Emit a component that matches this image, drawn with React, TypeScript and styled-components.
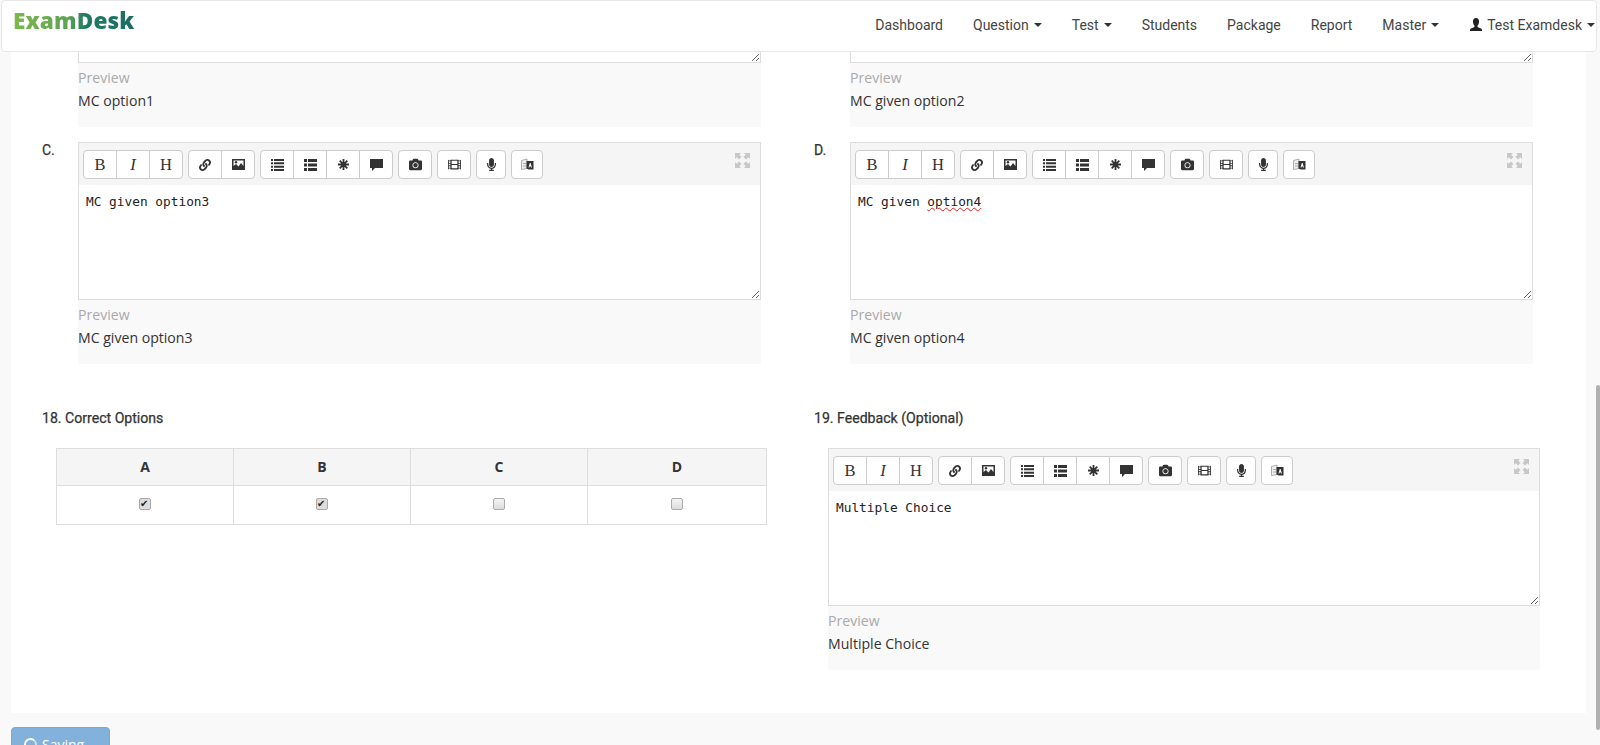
import React from 'react';
import styled, { createGlobalStyle } from 'styled-components';
import { FaLink, FaCamera, FaFilm, FaMicrophone } from 'react-icons/fa';

const Global = createGlobalStyle`
  html, body { margin: 0; padding: 0; height: 745px; overflow: hidden; background: #f9f9f9; }
  body { font-family: "Open Sans", sans-serif; color: #333; }
  * { box-sizing: border-box; }
`;

const Page = styled.div`
  width: 1600px;
  height: 745px;
  overflow: hidden;
  padding-left: 11px;
`;

const Navbar = styled.nav`
  position: fixed;
  top: 0;
  left: 1px;
  width: 1596px;
  height: 52px;
  background: #fff;
  border: 1px solid #e7e7e7;
  border-radius: 4px;
  display: flex;
  align-items: flex-start;
  justify-content: space-between;
  z-index: 5;
`;

const Logo = styled.span`
  margin: 6px 0 0 11px;
  font-family: "Open Sans", sans-serif;
  font-weight: 800;
  font-size: 22.6px;
  line-height: 28px;
  letter-spacing: 0.1px;
  background: linear-gradient(90deg, #7cb84c 0%, #5fa552 45%, #1f7a63 60%, #1c6c66 100%);
  -webkit-background-clip: text;
  background-clip: text;
  color: transparent;
`;

const NavList = styled.ul`
  list-style: none;
  display: flex;
  margin: 0;
  padding: 0;
  height: 48px;
  align-items: center;
`;

const NavItem = styled.li`
  display: flex;
  align-items: center;
  padding: 0 15px;
  font-family: Roboto, sans-serif;
  font-size: 14px;
  color: #444;
  white-space: nowrap;
  &:last-child { padding: 0 1px 0 15px; }
`;

const Caret = styled.span`
  width: 0;
  height: 0;
  margin-left: 5px;
  border-left: 4px solid transparent;
  border-right: 4px solid transparent;
  border-top: 4px solid #333;
`;

const UserIconSvg = styled.svg`
  margin-right: 4px;
  flex: none;
`;

const Panel = styled.main`
  width: 1575px;
  height: 713px;
  background: #fff;
  padding-left: 31px;
`;

const Columns = styled.div`
  display: grid;
  grid-template-columns: 772px 772px;
`;

const OptionRow = styled(Columns)`
  margin-bottom: 15px;
`;

const Option = styled.div`
  display: flex;
  align-items: flex-start;
`;

const OptionLetter = styled.div`
  width: 36px;
  margin-top: -1px;
  font-family: Roboto, sans-serif;
  font-weight: 400;
  -webkit-text-stroke: 0.25px #333;
  font-size: 14px;
  line-height: 18px;
`;

const OptionBody = styled.div`
  width: 683px;
`;

const Toolbar = styled.div`
  display: flex;
  align-items: flex-start;
  gap: 5px;
  height: 43px;
  padding: 7px 4px 0;
  background: #f5f5f5;
  border: 1px solid #ddd;
  border-bottom: 0;
`;

const ButtonGroup = styled.div`
  display: flex;
`;

const ToolButton = styled.button<{ $w?: number }>`
  width: ${(p) => p.$w ?? 34}px;
  height: 29px;
  margin-left: -1px;
  padding: 0;
  display: flex;
  align-items: center;
  justify-content: center;
  background: #fff;
  border: 1px solid #ccc;
  color: #333;
  font-family: "Liberation Serif", serif;
  font-size: 16.5px;
  svg { display: block; }
  &:first-child { margin-left: 0; border-radius: 4px 0 0 4px; }
  &:last-child { border-radius: 0 4px 4px 0; }
  &:only-child { border-radius: 4px; }
`;

const Italic = styled.i`
  font-style: italic;
`;

const Expand = styled.svg`
  margin: 3px 6px 0 auto;
  flex: none;
`;

const TextBox = styled.div<{ $h: number }>`
  height: ${(p) => p.$h}px;
  padding: 8px 7px;
  background: #fff;
  border: 1px solid #ddd;
  border-top: 0;
  font-family: "DejaVu Sans Mono", monospace;
  font-size: 12.8px;
  line-height: 18px;
  color: #222;
  white-space: pre;
  overflow: auto;
  resize: vertical;
`;

const Misspelled = styled.span`
  text-decoration: underline wavy #e02020 1px;
  text-underline-offset: 1px;
`;

const Preview = styled.div`
  height: 64px;
  padding-top: 3px;
  background: #f9f9f9;
  font-size: 14.1px;
  line-height: 23px;
`;

const PreviewTitle = styled.div`
  color: #aaa;
`;

const SectionRow = styled(Columns)`
  padding-top: 44px;
`;

const SectionTitle = styled.div`
  font-family: Roboto, sans-serif;
  font-weight: 400;
  -webkit-text-stroke: 0.25px #333;
  font-size: 14.1px;
  line-height: 20px;
  color: #333;
  margin-bottom: 20px;
`;

const Indented = styled.div<{ $w: number }>`
  margin-left: 14px;
  width: ${(p) => p.$w}px;
`;

const Table = styled.table`
  width: 711px;
  table-layout: fixed;
  border-collapse: collapse;
  border: 1px solid #ddd;
`;

const HeadCell = styled.th`
  height: 37px;
  padding: 0 0 1px;
  background: #f5f5f5;
  border: 1px solid #ddd;
  font-family: "Open Sans", sans-serif;
  font-size: 14px;
  font-weight: 700;
  color: #333;
  &:not(:last-child) { width: 177px; }
`;

const BodyCell = styled.td`
  height: 39px;
  padding: 0 0 2px;
  text-align: center;
  border: 1px solid #ddd;
`;

const Check = styled.input`
  appearance: none;
  display: block;
  position: relative;
  width: 12px;
  height: 12px;
  margin: 0 auto;
  border: 1px solid #aaa;
  border-radius: 2px;
  background: linear-gradient(#f4f4f4, #dcdcdc);
  &:checked { background: #ddd; }
  &:checked::after {
    content: '✔';
    position: absolute;
    left: 0;
    top: -1px;
    font-size: 10px;
    line-height: 12px;
    color: #222;
    font-family: "DejaVu Sans", sans-serif;
  }
`;

const SaveButton = styled.button`
  display: flex;
  align-items: center;
  gap: 5px;
  width: 99px;
  height: 34px;
  margin-top: 14px;
  padding: 0 12px;
  background: #82b1dc;
  border: 1px solid #7aa8d3;
  border-radius: 4px;
  color: #fff;
  font-family: "Open Sans", sans-serif;
  font-size: 14px;
`;

const Spinner = styled.span`
  width: 13px;
  height: 13px;
  flex: none;
  border: 2px solid #fff;
  border-radius: 50%;
  border-right-color: rgba(255, 255, 255, 0.6);
`;

const ScrollThumb = styled.div`
  position: fixed;
  top: 385px;
  right: 0;
  width: 4px;
  height: 345px;
  background: #b0b0b0;
  border-radius: 2px;
`;

const UserIcon = () => (
  <UserIconSvg width="14" height="14" viewBox="0 0 14 14">
    <path fill="#222" d="M7 0c2.3 0 3.2 1.7 3 4-.1 1.4-.6 2.800-1.400 3.600-.3.600-.2 1.300.4 1.600 1.500.7 3.500 1.100 4 2.300v1.500H1v-1.500c.5-1.200 2.500-1.600 4-2.300.6-.3.700-1 .4-1.600C4.600 6.800 4.100 5.400 4 4 3.800 1.700 4.700 0 7 0z" />
  </UserIconSvg>
);

const PictureIcon = () => (
  <svg width="13" height="13" viewBox="0 0 13 13">
    <path fill="#333" fillRule="evenodd" d="M0 1h13v11H0zM1.500 2.500V8l2.500-2 2.500 2.500L9 5l2.500 3V2.500z" />
    <circle cx="4" cy="4.300" r="1.200" fill="#333" />
  </svg>
);

const ListIcon = () => (
  <svg width="13" height="12" viewBox="0 0 13 12" fill="#333">
    <path d="M0 0h2v2H0zM3 0h10v2H3zM0 3.300h2v2H0zM3 3.300h10v2H3zM0 6.700h2v2H0zM3 6.700h10v2H3zM0 10h2v2H0zM3 10h10v2H3z" />
  </svg>
);

const ThListIcon = () => (
  <svg width="13" height="12" viewBox="0 0 13 12" fill="#333">
    <path d="M0 0h3v3H0zM4 0h9v3H4zM0 4.500h3v3H0zM4 4.500h9v3H4zM0 9h3v3H0zM4 9h9v3H4z" />
  </svg>
);

const StarIcon = () => (
  <svg width="11" height="11" viewBox="0 0 11 11" stroke="#333" strokeWidth="1.800">
    <path d="M5.500 0v11M0 5.500h11M1.700 1.700l7.600 7.600M9.300 1.700L1.700 9.300" />
    <circle cx="5.500" cy="5.500" r="2.500" fill="#333" stroke="none" />
  </svg>
);

const CommentIcon = () => (
  <svg width="13" height="13" viewBox="0 0 13 13">
    <path fill="#333" d="M0 1h13v9H5l-3 3v-3H0z" />
  </svg>
);

const TranslateIcon = () => (
  <svg width="13" height="14" viewBox="0 0 13 14">
    <path fill="#eee" stroke="#999" strokeWidth="0.800" d="M.5 2.500L6 1v9.500l-5.500 1z" />
    <path fill="#aaa" d="M2 5h3v1H2zM2 7.500h3v1H2z" />
    <path fill="#333" d="M5.500 3H12.500v8.500h-5l-2-1z" />
    <path fill="#fff" d="M7.500 9.500l1.300-4.500h.8l1.300 4.500h-.9l-.2-1H8.600l-.2 1z" />
  </svg>
);

const ExpandIcon = () => (
  <Expand width="15" height="15" viewBox="0 0 15 15" fill="#c8c8c8">
    <path d="M0 0h6L4.300 1.700 6.500 4 4 6.500 1.700 4.300 0 6zM15 0v6l-1.700-1.700L11 6.500 8.500 4l2.200-2.300L9 0zM0 15V9l1.700 1.700L4 8.500 6.500 11l-2.200 2.300L6 15zM15 15H9l1.700-1.700L8.500 11 11 8.500l2.300 2.200L15 9z" />
  </Expand>
);

const EditorToolbar = () => (
  <Toolbar>
    <ButtonGroup>
      <ToolButton>B</ToolButton>
      <ToolButton><Italic>I</Italic></ToolButton>
      <ToolButton>H</ToolButton>
    </ButtonGroup>
    <ButtonGroup>
      <ToolButton><FaLink size={12} /></ToolButton>
      <ToolButton><PictureIcon /></ToolButton>
    </ButtonGroup>
    <ButtonGroup>
      <ToolButton><ListIcon /></ToolButton>
      <ToolButton><ThListIcon /></ToolButton>
      <ToolButton><StarIcon /></ToolButton>
      <ToolButton><CommentIcon /></ToolButton>
    </ButtonGroup>
    <ButtonGroup><ToolButton><FaCamera size={13} /></ToolButton></ButtonGroup>
    <ButtonGroup><ToolButton><FaFilm size={13} /></ToolButton></ButtonGroup>
    <ButtonGroup><ToolButton $w={30}><FaMicrophone size={13} /></ToolButton></ButtonGroup>
    <ButtonGroup><ToolButton $w={32}><TranslateIcon /></ToolButton></ButtonGroup>
    <ExpandIcon />
  </Toolbar>
);

const PreviewBlock = ({ text }: { text: string }) => (
  <Preview>
    <PreviewTitle>Preview</PreviewTitle>
    <div>{text}</div>
  </Preview>
);

const Stub = ({ text }: { text: string }) => (
  <Option>
    <OptionLetter />
    <OptionBody>
      <TextBox $h={63} />
      <PreviewBlock text={text} />
    </OptionBody>
  </Option>
);

const Full = ({ letter, value, text, children }: { letter: string; value?: string; text: string; children?: React.ReactNode }) => (
  <Option>
    <OptionLetter>{letter}</OptionLetter>
    <OptionBody>
      <EditorToolbar />
      <TextBox $h={115}>{value ?? children}</TextBox>
      <PreviewBlock text={text} />
    </OptionBody>
  </Option>
);

const letters = ['A', 'B', 'C', 'D'];
const checked = [true, true, false, false];

export default function App() {
  return (
    <Page>
      <Global />
      <Navbar>
        <Logo>ExamDesk</Logo>
        <NavList>
          <NavItem>Dashboard</NavItem>
          <NavItem>Question<Caret /></NavItem>
          <NavItem>Test<Caret /></NavItem>
          <NavItem>Students</NavItem>
          <NavItem>Package</NavItem>
          <NavItem>Report</NavItem>
          <NavItem>Master<Caret /></NavItem>
          <NavItem><UserIcon />Test Examdesk<Caret /></NavItem>
        </NavList>
      </Navbar>
      <Panel>
        <OptionRow>
          <Stub text="MC option1" />
          <Stub text="MC given option2" />
        </OptionRow>
        <Columns>
          <Full letter="C." value="MC given option3" text="MC given option3" />
          <Full letter="D." text="MC given option4">MC given <Misspelled>option4</Misspelled></Full>
        </Columns>
        <SectionRow>
          <div>
            <SectionTitle>18. Correct Options</SectionTitle>
            <Indented $w={711}>
              <Table>
                <thead>
                  <tr>{letters.map((l) => <HeadCell key={l}>{l}</HeadCell>)}</tr>
                </thead>
                <tbody>
                  <tr>
                    {letters.map((l, i) => (
                      <BodyCell key={l}><Check type="checkbox" defaultChecked={checked[i]} /></BodyCell>
                    ))}
                  </tr>
                </tbody>
              </Table>
            </Indented>
          </div>
          <div>
            <SectionTitle>19. Feedback (Optional)</SectionTitle>
            <Indented $w={712}>
              <EditorToolbar />
              <TextBox $h={115}>Multiple Choice</TextBox>
              <PreviewBlock text="Multiple Choice" />
            </Indented>
          </div>
        </SectionRow>
      </Panel>
      <SaveButton disabled><Spinner />Saving...</SaveButton>
      <ScrollThumb />
    </Page>
  );
}
